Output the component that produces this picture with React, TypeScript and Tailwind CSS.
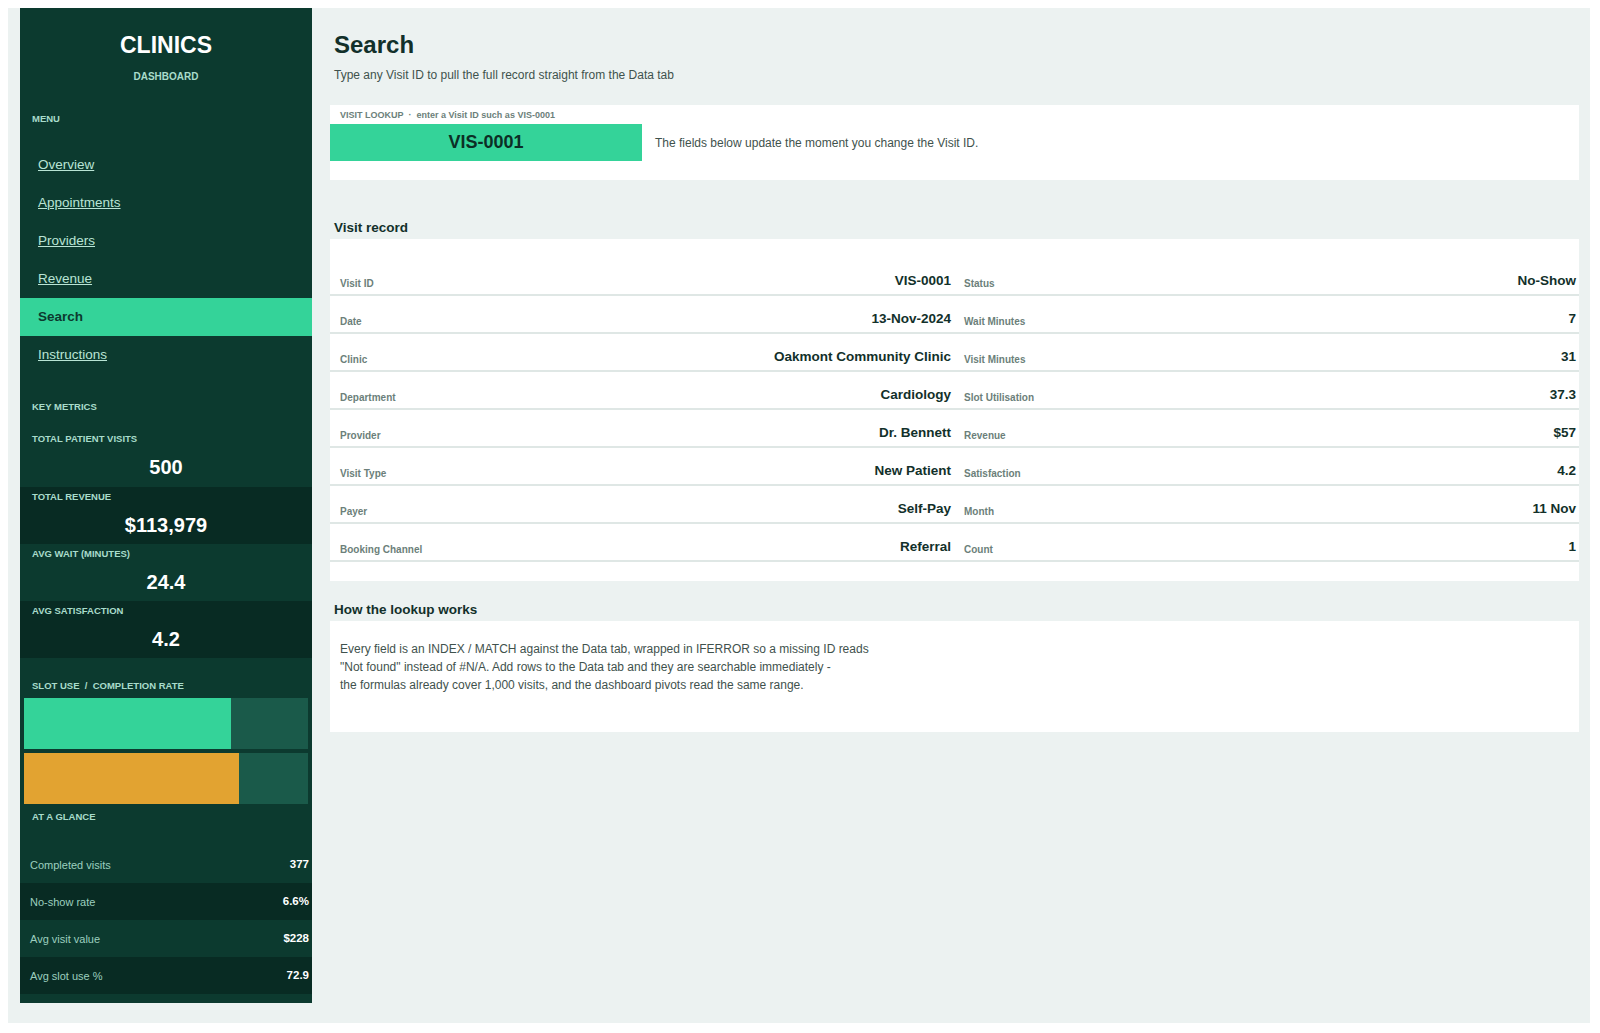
import React from "react";

const F = { fontFamily: '"Liberation Sans", Arial, sans-serif' };

const nav = ["Overview", "Appointments", "Providers", "Revenue", "Search", "Instructions"];
const metrics = [
  ["TOTAL PATIENT VISITS", "500", false],
  ["TOTAL REVENUE", "$113,979", true],
  ["AVG WAIT (MINUTES)", "24.4", false],
  ["AVG SATISFACTION", "4.2", true],
] as const;
const glance = [
  ["Completed visits", "377"],
  ["No-show rate", "6.6%"],
  ["Avg visit value", "$228"],
  ["Avg slot use %", "72.9"],
];
const rows = [
  ["Visit ID", "VIS-0001", "Status", "No-Show"],
  ["Date", "13-Nov-2024", "Wait Minutes", "7"],
  ["Clinic", "Oakmont Community Clinic", "Visit Minutes", "31"],
  ["Department", "Cardiology", "Slot Utilisation", "37.3"],
  ["Provider", "Dr. Bennett", "Revenue", "$57"],
  ["Visit Type", "New Patient", "Satisfaction", "4.2"],
  ["Payer", "Self-Pay", "Month", "11 Nov"],
  ["Booking Channel", "Referral", "Count", "1"],
];

export default function App() {
  return (
    <div className="bg-white p-2 w-[1600px] h-[1033px]" style={F}>
      <div className="bg-[#ecf2f1] w-[1582px] h-[1015px] pl-3 flex">
        <aside className="w-[292px] h-[995px] bg-[#0c3a2f] flex flex-col shrink-0">
          <div className="text-center text-white font-bold text-[23px] mt-[23px] leading-[28px]">CLINICS</div>
          <div className="text-center text-[#a9dccb] font-bold text-[10px] mt-[10px]">DASHBOARD</div>
          <div className="text-[#a9dccb] font-bold text-[9.5px] px-3 mt-[28px]">MENU</div>
          <div className="mt-[20px] flex flex-col">
            {nav.map((n) =>
              n === "Search" ? (
                <div key={n} className="h-[38px] bg-[#34d399] text-[#0c3a2f] font-bold text-[13.5px] px-[18px] flex items-center">{n}</div>
              ) : (
                <div key={n} className="h-[38px] text-[#b9e4d5] underline text-[13.5px] px-[18px] flex items-center">{n}</div>
              )
            )}
          </div>
          <div className="text-[#a9dccb] font-bold text-[9.5px] px-3 mt-[26px] h-[22px]">KEY METRICS</div>
          <div className="flex flex-col">
            {metrics.map(([l, v, d], i) => (
              <div key={l} className={`${d ? "bg-[#082b23]" : "bg-[#0c3a2f]"} ${i === 0 ? "h-[65px] pt-[11px]" : "h-[57px] pt-[4px]"} px-3`}>
                <div className="text-[#a9dccb] font-bold text-[9.5px] leading-[11px]">{l}</div>
                <div className="text-white font-bold text-[20px] text-center mt-[12px] leading-[22px]">{v}</div>
              </div>
            ))}
          </div>
          <div className="text-[#a9dccb] font-bold text-[9.5px] px-3 mt-[22px] leading-[11px]">SLOT USE&nbsp;&nbsp;/&nbsp;&nbsp;COMPLETION RATE</div>
          <div className="px-1 mt-[7px] flex flex-col gap-1">
            <div className="h-[51px] bg-[#1a5a4a]"><div className="h-full bg-[#34d399]" style={{ width: "73%" }} /></div>
            <div className="h-[51px] bg-[#1a5a4a]"><div className="h-full bg-[#e2a331]" style={{ width: "75.8%" }} /></div>
          </div>
          <div className="text-[#a9dccb] font-bold text-[9.5px] px-3 mt-[7px] leading-[11px]">AT A GLANCE</div>
          <div className="mt-[24px] flex flex-col">
            {glance.map(([l, v], i) => (
              <div key={l} className={`${i % 2 ? "bg-[#082b23]" : "bg-[#0c3a2f]"} h-[37px] flex items-center justify-between pl-[10px] pr-[3px]`}>
                <span className="text-[#9ccfbf] text-[11px]">{l}</span>
                <span className="text-white font-bold text-[11.5px]">{v}</span>
              </div>
            ))}
          </div>
        </aside>
        <main className="flex-1 pl-[22px] pr-[11px]">
          <h1 className="text-[#12302a] font-bold text-[24px] mt-[23px] leading-[28px]">Search</h1>
          <p className="text-[#3f524d] text-[12px] mt-[7px]">Type any Visit ID to pull the full record straight from the Data tab</p>
          <div className="bg-white -ml-1 mt-[21px] h-[75px] pt-[4px]">
            <div className="text-[#6c7f7a] font-bold text-[9px] pl-[10px] h-[15px] leading-[12px]">VISIT LOOKUP&nbsp;&nbsp;·&nbsp;&nbsp;enter a Visit ID such as VIS-0001</div>
            <div className="flex items-center">
              <div className="w-[312px] h-[37px] bg-[#34d399] flex items-center justify-center font-bold text-[18px] text-[#0c2e26]">VIS-0001</div>
              <span className="ml-[13px] text-[#3f524d] text-[12px]">The fields below update the moment you change the Visit ID.</span>
            </div>
          </div>
          <h2 className="text-[#12302a] font-bold text-[13.5px] mt-[40px] leading-[16px]">Visit record</h2>
          <div className="bg-white -ml-1 mt-[3px] h-[342px] pt-[19px]">
            {rows.map(([a, b, c, d]) => (
              <div key={a} className="h-[38px] flex items-end pb-[3px] border-b-2 border-[#dfe7e5]">
                <div className="w-[621px] pl-[10px] flex justify-between items-end">
                  <span className="text-[#6c7f7a] font-bold text-[10px]">{a}</span>
                  <span className="text-[#12302a] font-bold text-[13.5px]">{b}</span>
                </div>
                <div className="flex-1 pl-[13px] pr-[3px] flex justify-between items-end">
                  <span className="text-[#6c7f7a] font-bold text-[10px]">{c}</span>
                  <span className="text-[#12302a] font-bold text-[13.5px]">{d}</span>
                </div>
              </div>
            ))}
          </div>
          <h2 className="text-[#12302a] font-bold text-[13.5px] mt-[21px] leading-[16px]">How the lookup works</h2>
          <div className="bg-white -ml-1 mt-[3px] h-[111px] pt-[19px] pl-[10px] text-[#3f524d] text-[12px] leading-[18px]">
            <div>Every field is an INDEX / MATCH against the Data tab, wrapped in IFERROR so a missing ID reads</div>
            <div>"Not found" instead of #N/A. Add rows to the Data tab and they are searchable immediately -</div>
            <div>the formulas already cover 1,000 visits, and the dashboard pivots read the same range.</div>
          </div>
        </main>
      </div>
    </div>
  );
}
